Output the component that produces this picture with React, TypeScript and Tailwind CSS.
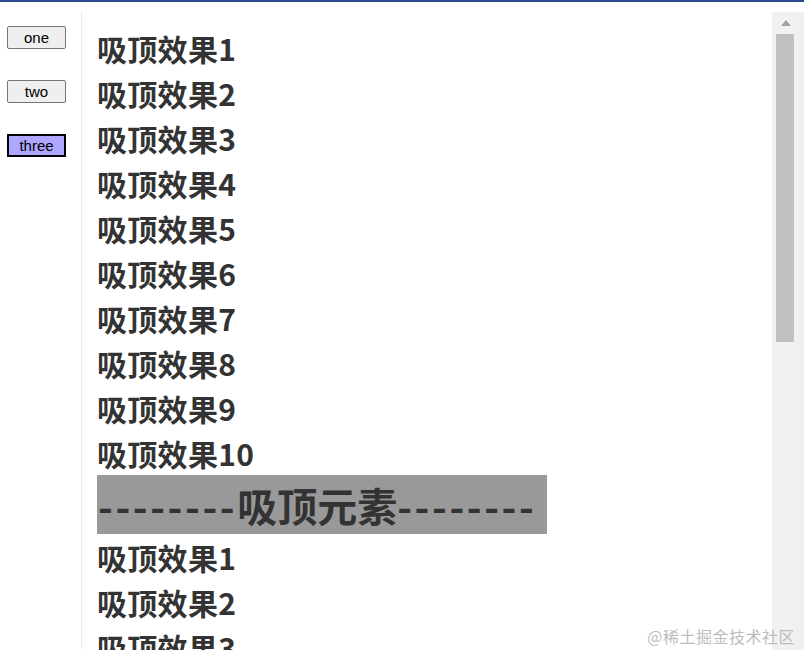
import React from 'react';

const ITEMS = Array.from({ length: 10 }, (_, i) => `吸顶效果${i + 1}`);
const font = { fontFamily: '"Noto Sans CJK SC", "Noto Sans", sans-serif' };

export default function App() {
    return (
        <div className="relative w-[804px] h-[650px] overflow-hidden bg-white border-t-2 border-[#2c4a8c] flex" style={font}>
            {/* Left nav */}
            <nav className="w-[81px] shrink-0 flex flex-col gap-[31px] pl-[7px] pt-[24px]" style={{ fontFamily: '"Liberation Sans", Arial, sans-serif' }}>
                <button className="w-[59px] h-[23px] bg-[#efefef] border border-[#767676] rounded-[2px] text-[15px] leading-none text-black">one</button>
                <button className="w-[59px] h-[23px] bg-[#efefef] border border-[#767676] rounded-[2px] text-[15px] leading-none text-black">two</button>
                <button className="w-[59px] h-[23px] bg-[#aea6ff] border-2 border-black text-[15px] leading-none text-black">three</button>
            </nav>

            {/* Content */}
            <main className="flex-1 mt-[10px] border-l border-dotted border-[#d8d8d8] pl-[15px] pt-[13px] text-[#333]">
                {ITEMS.map((t) => (
                    <div key={t} className="h-[45px] flex items-center text-[30px] font-bold leading-none tracking-[0.3px]">{t}</div>
                ))}
                <div className="w-[450px] h-[59px] bg-[#999] flex items-center text-[40px] font-bold leading-none whitespace-nowrap overflow-hidden pl-[1px]">
                    <span className="tracking-[2.6px]">--------</span>
                    <span>吸顶元素</span>
                    <span className="tracking-[2.6px]">--------</span>
                </div>
                {ITEMS.slice(0, 3).map((t) => (
                    <div key={'b' + t} className="h-[45px] flex items-center text-[30px] font-bold leading-none tracking-[0.3px]">{t}</div>
                ))}
            </main>

            {/* Scrollbar */}
            <div className="w-[23px] shrink-0 mt-[10px] bg-[#f1f1f1] flex flex-col pl-[4px]">
                <div className="h-[22px] w-[19px] flex items-center justify-center">
                    <svg width="10" height="6" viewBox="0 0 10 6"><path d="M5 0 L10 6 L0 6 Z" fill="#a3a3a3" /></svg>
                </div>
                <div className="h-[308px] w-[18px] bg-[#c1c1c1]" />
            </div>
            <div className="w-[9px] shrink-0 mt-[10px] bg-[#f0f0f4]" />

            <span className="absolute right-[9px] bottom-[6px] text-[16px] tracking-[0.5px] text-[#bdbdbd] leading-none">@稀土掘金技术社区</span>
        </div>
    );
}
